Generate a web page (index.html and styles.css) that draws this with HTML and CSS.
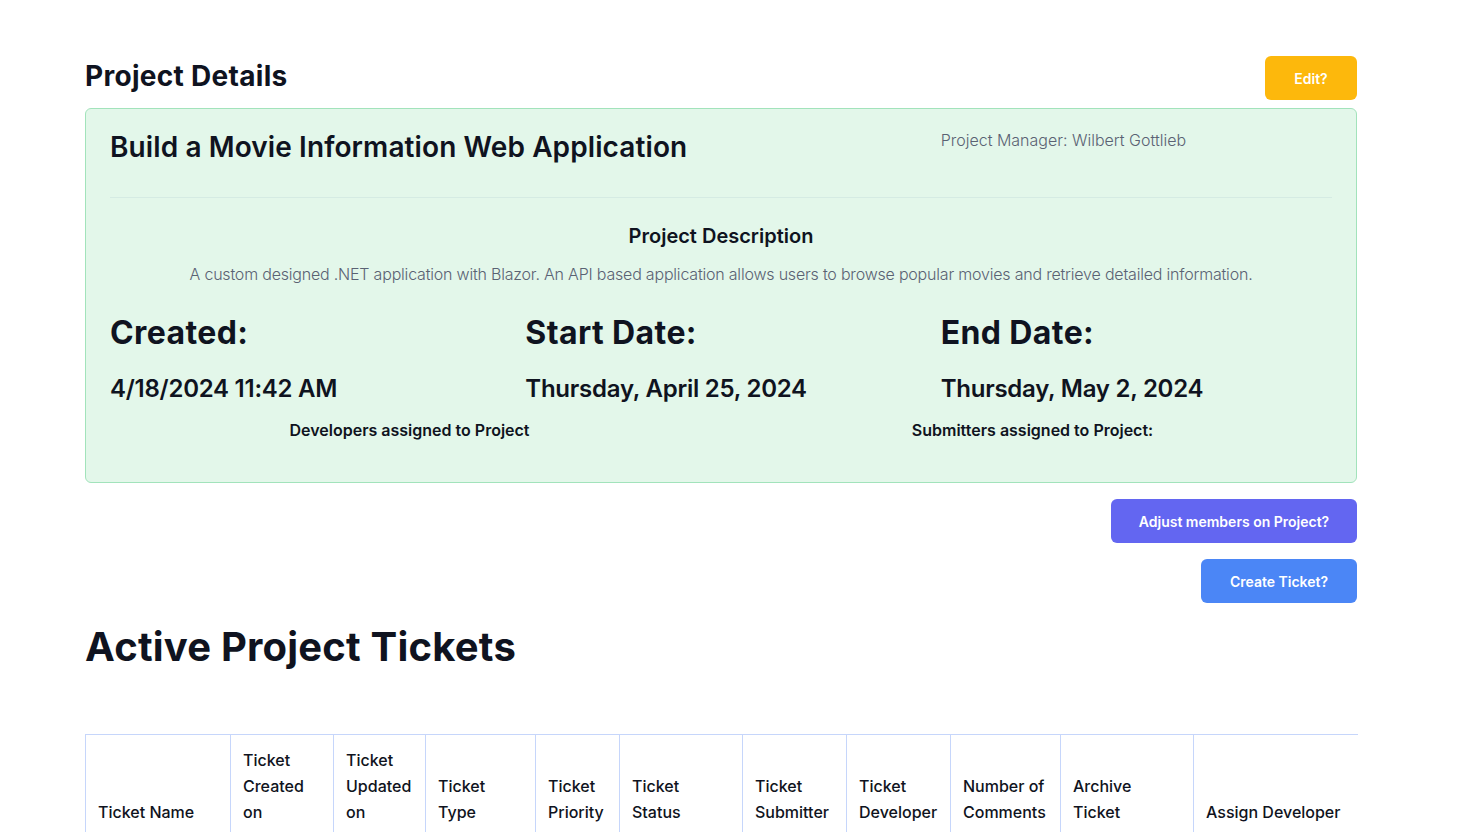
FILE: index.html
```html
<!DOCTYPE html>
<html lang="en">
<head>
<meta charset="utf-8">
<title>Project Details</title>
<link rel="stylesheet" href="styles.css">
</head>
<body>
<main class="page">
  <div class="page-head">
    <h2 class="page-title">Project Details</h2>
    <button class="btn btn-edit">Edit?</button>
  </div>

  <section class="card">
    <div class="card-top">
      <h3 class="project-name">Build a Movie Information Web Application</h3>
      <p class="manager">Project Manager: Wilbert Gottlieb</p>
    </div>
    <hr class="divider">
    <h4 class="desc-title">Project Description</h4>
    <p class="desc">A custom designed .NET application with Blazor. An API based application allows users to browse popular movies and retrieve detailed information.</p>

    <div class="dates">
      <div class="date-col">
        <h2 class="date-label">Created:</h2>
        <h3 class="date-value">4/18/2024 11:42 AM</h3>
      </div>
      <div class="date-col">
        <h2 class="date-label">Start Date:</h2>
        <h3 class="date-value">Thursday, April 25, 2024</h3>
      </div>
      <div class="date-col">
        <h2 class="date-label">End Date:</h2>
        <h3 class="date-value">Thursday, May 2, 2024</h3>
      </div>
    </div>

    <div class="members">
      <h5 class="members-title">Developers assigned to Project</h5>
      <h5 class="members-title">Submitters assigned to Project:</h5>
    </div>
  </section>

  <div class="actions">
    <button class="btn btn-members">Adjust members on Project?</button>
    <button class="btn btn-ticket">Create Ticket?</button>
  </div>

  <h1 class="tickets-title">Active Project Tickets</h1>

  <table class="tickets">
    <colgroup>
      <col class="c1"><col class="c2"><col class="c3"><col class="c4"><col class="c5"><col class="c6"><col class="c7"><col class="c8"><col class="c9"><col class="c10"><col class="c11">
    </colgroup>
    <thead>
      <tr>
        <th>Ticket Name</th>
        <th>Ticket Created on</th>
        <th>Ticket Updated on</th>
        <th>Ticket Type</th>
        <th>Ticket Priority</th>
        <th>Ticket Status</th>
        <th>Ticket Submitter</th>
        <th>Ticket Developer</th>
        <th>Number of Comments</th>
        <th>Archive Ticket</th>
        <th>Assign Developer</th>
      </tr>
    </thead>
  </table>
</main>
</body>
</html>
```

FILE: styles.css
```css
* { box-sizing: border-box; }

html, body {
  margin: 0;
  padding: 0;
  background: #ffffff;
}

body {
  font-family: Inter, "Noto Sans", "Liberation Sans", sans-serif;
  color: #0f1320;
  -webkit-font-smoothing: antialiased;
}

.page {
  width: 1272px;
  margin-left: 85px;
  padding-top: 56px;
}

.page-head {
  display: flex;
  justify-content: space-between;
  align-items: flex-start;
  margin-bottom: 8px;
}

.page-title {
  margin: 2px 0 0;
  font-size: 28px;
  line-height: 36px;
  font-weight: 700;
  letter-spacing: 0.3px;
}

.btn {
  border: 0;
  border-radius: 6px;
  color: #ffffff;
  font-family: inherit;
  font-size: 14px;
  font-weight: 600;
  height: 44px;
  padding: 0;
  cursor: pointer;
}

.btn-edit {
  background: #fdb80c;
  width: 92px;
}

.btn-members {
  background: #6366f1;
  width: 246px;
}

.btn-ticket {
  background: #4b86f6;
  width: 156px;
}

.card {
  background: #e3f7ea;
  border: 1px solid #a2e3bb;
  border-radius: 6px;
  padding: 22px 24px 42px;
}

.card-top {
  display: grid;
  grid-template-columns: 1fr 1fr 1fr;
  column-gap: 24px;
  height: 66px;
}

.project-name {
  grid-column: 1 / span 2;
  margin: 0;
  font-size: 28px;
  line-height: 32px;
  font-weight: 600;
  letter-spacing: 0.1px;
}

.manager {
  margin: 0;
  font-size: 16px;
  line-height: 18px;
  font-weight: 300;
  color: #5a6273;
}

.divider {
  border: 0;
  border-top: 1px solid #d5ebe3;
  margin: 0 0 24px;
}

.desc-title {
  margin: 0;
  text-align: center;
  font-size: 20px;
  line-height: 28px;
  font-weight: 600;
}

.desc {
  margin: 14px 0 0;
  text-align: center;
  font-size: 16px;
  line-height: 20px;
  font-weight: 300;
  color: #5a6273;
  letter-spacing: -0.2px;
}

.dates {
  display: grid;
  grid-template-columns: 1fr 1fr 1fr;
  column-gap: 24px;
  margin-top: 29px;
}

.date-label {
  margin: 0;
  font-size: 32px;
  line-height: 40px;
  font-weight: 700;
  letter-spacing: 0.4px;
}

.date-value {
  margin: 21px 0 0;
  font-size: 24px;
  line-height: 30px;
  font-weight: 600;
  letter-spacing: -0.25px;
}

.members {
  display: grid;
  grid-template-columns: 1fr 1fr;
  column-gap: 24px;
  margin-top: 16px;
}

.members-title {
  margin: 0;
  text-align: center;
  font-size: 16px;
  line-height: 20px;
  font-weight: 600;
}

.actions {
  display: flex;
  flex-direction: column;
  align-items: flex-end;
  gap: 16px;
  margin-top: 16px;
}

.tickets-title {
  margin: 20px 0 0;
  font-size: 40px;
  line-height: 48px;
  font-weight: 700;
  letter-spacing: 0.2px;
}

.tickets {
  margin-top: 63px;
  border-collapse: collapse;
  table-layout: fixed;
  width: 1272px;
  border-top: 1px solid #c6d6fb;
}

.tickets th {
  text-align: left;
  vertical-align: bottom;
  font-size: 16px;
  line-height: 26px;
  font-weight: 500;
  padding: 12px 12px 10px;
  border-left: 1px solid #c6d6fb;
  border-bottom: 1px solid #c6d6fb;
}

.c1 { width: 145px; }
.c2 { width: 103px; }
.c3 { width: 92px; }
.c4 { width: 110px; }
.c5 { width: 84px; }
.c6 { width: 123px; }
.c7 { width: 104px; }
.c8 { width: 104px; }
.c9 { width: 110px; }
.c10 { width: 133px; }
.c11 { width: 164px; }
```
